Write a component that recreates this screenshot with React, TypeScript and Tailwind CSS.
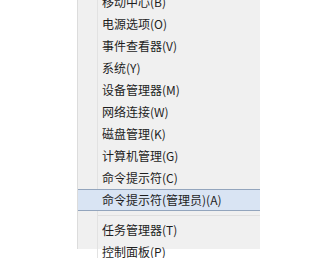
const ITEMS_TOP = [
  "移动中心(B)",
  "电源选项(O)",
  "事件查看器(V)",
  "系统(Y)",
  "设备管理器(M)",
  "网络连接(W)",
  "磁盘管理(K)",
  "计算机管理(G)",
  "命令提示符(C)",
]

const ITEMS_BOTTOM = ["任务管理器(T)", "控制面板(P)"]

function Row({ label }: { label: string }) {
  return (
    <div className="flex h-[22px] items-center">
      <div className="h-full w-[20px] shrink-0 border-r border-[#e2e2e2]" />
      <span className="pl-[4px] text-[12px] leading-none text-[#1e1e1e]">{label}</span>
    </div>
  )
}

export default function App() {
  return (
    <div
      className="h-[258px] w-[322px] overflow-hidden bg-white"
      style={{ fontFamily: '"Noto Sans CJK SC", "Noto Sans", sans-serif' }}
    >
      <div className="ml-[77px] h-full w-[183px] border-l border-[#dcdcdc] bg-[#f0f0f0]">
        <div className="-mt-[9px]">
          {ITEMS_TOP.map(l => (
            <Row key={l} label={l} />
          ))}

          {/* Highlighted item */}
          <div className="flex h-[22px] items-center border-y border-[#93a5bd] bg-[#d9e4f3]">
            <div className="w-[20px] shrink-0" />
            <span className="pl-[4px] text-[12px] leading-none text-[#1e1e1e]">命令提示符(管理员)(A)</span>
          </div>

          {/* Separator */}
          <div className="flex h-[8px] items-center">
            <div className="h-full w-[20px] shrink-0 border-r border-[#e2e2e2]" />
            <div className="h-px flex-1 bg-[#e0e0e0]" />
          </div>

          {ITEMS_BOTTOM.map(l => (
            <Row key={l} label={l} />
          ))}
        </div>
      </div>
    </div>
  )
}
